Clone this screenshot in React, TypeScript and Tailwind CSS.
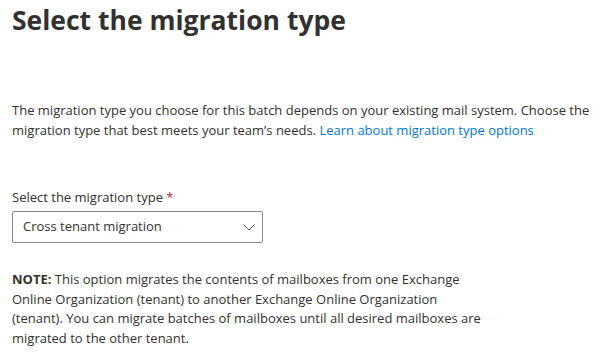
export default function App() {
    return (
        <div
            className="w-[612px] h-[355px] overflow-hidden bg-white px-3 text-[#323130]"
            style={{ fontFamily: '"Open Sans", "Noto Sans", sans-serif' }}
        >
            <h1 className="pt-[2px] text-[26.5px] font-bold leading-[36px] text-[#323130]">
                Select the migration type
            </h1>

            <p className="mt-[62px] whitespace-nowrap text-[13px] leading-[20px]">
                The migration type you choose for this batch depends on your existing mail system. Choose the
                <br />
                migration type that best meets your team’s needs.{" "}
                <a href="#" className="text-[#0078d4]">
                    Learn about migration type options
                </a>
            </p>

            <label className="mt-[47px] block text-[13px] leading-[20px]">
                Select the migration type <span className="text-[#a4262c]">*</span>
            </label>

            {/* Dropdown */}
            <div className="mt-[4px] flex h-[32px] w-[251px] items-center justify-between rounded-[2px] border border-[#8a8886] pl-[10px] pr-[7px]">
                <span className="text-[13px]">Cross tenant migration</span>
                <svg width="12" height="12" viewBox="0 0 12 12" fill="none" stroke="#605e5c" strokeWidth="1">
                    <path d="M0.5 3.5l5.5 5.5 5.5-5.5" />
                </svg>
            </div>

            <p className="mt-[27px] whitespace-nowrap text-[13px] leading-[19.5px]">
                <span className="font-bold">NOTE:</span> This option migrates the contents of mailboxes from one Exchange
                <br />
                Online Organization (tenant) to another Exchange Online Organization
                <br />
                (tenant). You can migrate batches of mailboxes until all desired mailboxes are
                <br />
                migrated to the other tenant.
            </p>
        </div>
    );
}
